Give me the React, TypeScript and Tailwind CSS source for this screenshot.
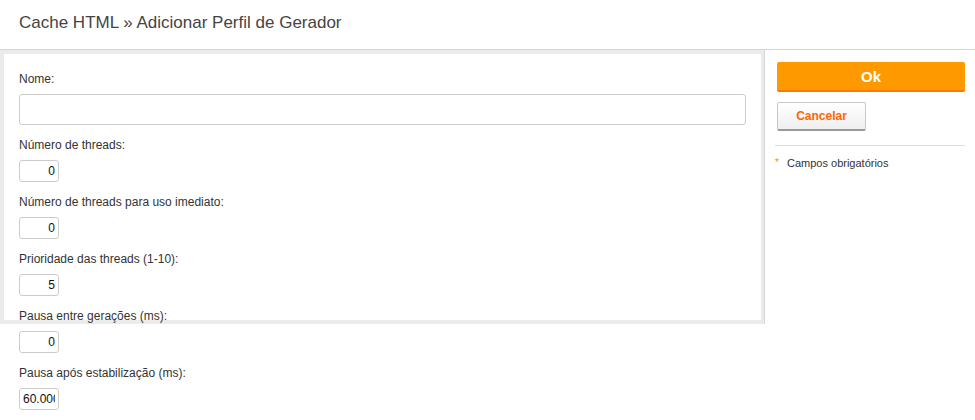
import React from 'react';

const fields = [
  { label: 'Número de threads:', value: '0' },
  { label: 'Número de threads para uso imediato:', value: '0' },
  { label: 'Prioridade das threads (1-10):', value: '5' },
  { label: 'Pausa entre gerações (ms):', value: '0' },
  { label: 'Pausa após estabilização (ms):', value: '60.000' },
];

export default function App() {
  return (
    <div className="w-[975px] h-[420px] bg-white text-[#333] overflow-hidden" style={{ fontFamily: '"Liberation Sans", Arial, sans-serif' }}>
      <div className="h-[50px] border-b border-[#d4d4d4] px-[19px] pt-[11px]">
        <h1 className="text-[17px] leading-[24px] text-[#444]">Cache HTML » Adicionar Perfil de Gerador</h1>
      </div>

      <div className="flex">
        {/* form */}
        <div className="w-[765px] h-[274px] shrink-0 bg-[#ebebeb] p-[4px] pr-[3px] border-r border-[#d6d6d6]">
          <div className="h-[266px] bg-white px-[15px] pt-[17px]">
            <label className="block text-[12px] leading-[16px]">Nome:</label>
            <input
              type="text"
              className="mt-[7px] block w-full h-[31px] border border-[#ccc] rounded-[3px] bg-white outline-none"
            />
            {fields.map((f) => (
              <div key={f.label} className="mt-[12px]">
                <label className="block text-[12px] leading-[16px]">{f.label}</label>
                <input
                  type="text"
                  defaultValue={f.value}
                  className="mt-[7px] block w-[40px] h-[22px] border border-[#ccc] rounded-[3px] bg-white text-right text-[12px] text-[#111] px-[3px] outline-none"
                />
              </div>
            ))}
          </div>
        </div>

        {/* actions */}
        <div className="flex-1 pt-[12px] pl-[12px] pr-[10px]">
          <button className="w-full h-[30px] bg-[#ff9900] border-b-2 border-[#ff7700] rounded-[2px] text-white font-bold text-[15px] leading-none">
            Ok
          </button>
          <button className="mt-[10px] w-[89px] h-[29px] border border-[#c8c8c8] border-b-2 border-b-[#999] rounded-[2px] bg-gradient-to-b from-white to-[#efefef] text-[#ff6600] font-bold text-[12px]">
            Cancelar
          </button>
          <div className="mt-[14px] -ml-[2px] border-t border-[#ddd] pt-[9px] flex items-center text-[11px]">
            <span className="text-[#f29400] text-[10px] w-[12px] leading-none">*</span>
            <span>Campos obrigatórios</span>
          </div>
        </div>
      </div>
    </div>
  );
}
